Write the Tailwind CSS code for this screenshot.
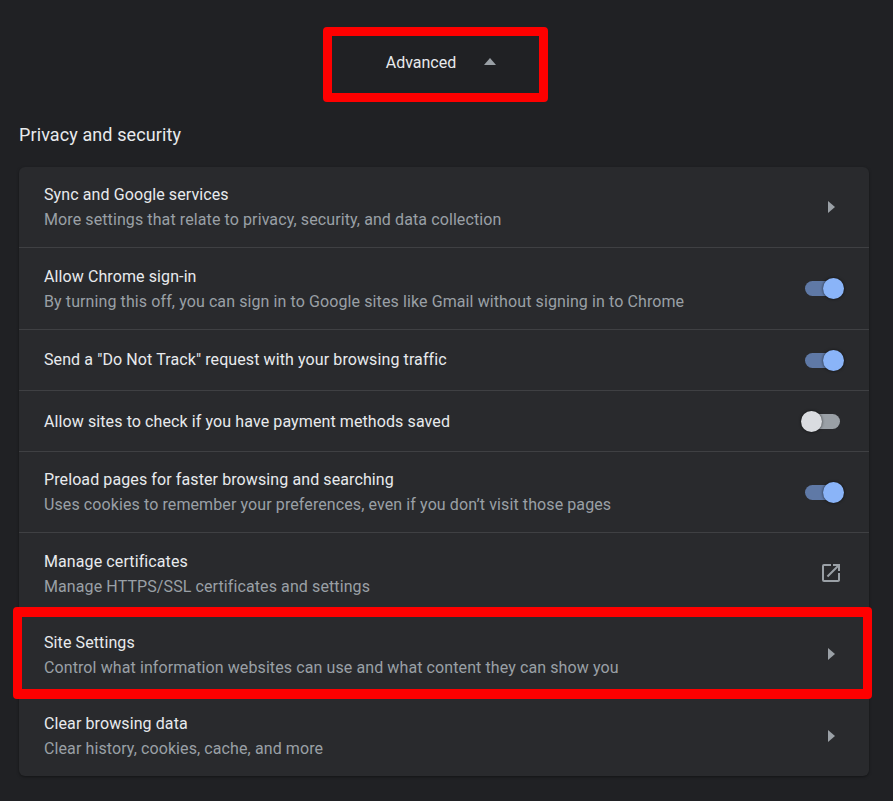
<!DOCTYPE html>
<html lang="en">
<head>
  <meta charset="UTF-8">
  <title>Settings - Privacy and security</title>
  <script src="https://cdn.jsdelivr.net/npm/@tailwindcss/browser@4"></script>
</head>
<body class="bg-[#202124] h-[801px] overflow-hidden relative font-['Roboto',sans-serif]">

  <!-- Advanced toggle -->
  <div class="h-[124px] pt-[2px] flex items-center justify-center">
    <div class="flex items-center gap-[28px] ml-[-11px]">
      <span class="text-[16px] text-[#e8eaed]">Advanced</span>
      <svg class="w-[12px] h-[7px] mb-[3px]" viewBox="0 0 12 7"><path d="M0 7L6 0l6 7z" fill="#9aa0a6"/></svg>
    </div>
  </div>

  <h2 class="px-[19px] text-[18px] leading-[22px] tracking-[0.1px] text-[#e8eaed]">Privacy and security</h2>

  <!-- Card -->
  <div class="mx-[19px] mt-[21px] w-[850px] h-[609px] bg-[#292a2d] rounded-[6px] flex flex-col divide-y divide-[#3f4043] shadow-[0_1px_3px_rgba(0,0,0,0.4)] text-[16px] leading-[25px] tracking-[0.1px]">

    <div class="h-[81px] shrink-0 flex items-center justify-between pl-[25px] pr-[34px]">
      <div>
        <p class="text-[#e8eaed]">Sync and Google services</p>
        <p class="text-[#9aa0a6]">More settings that relate to privacy, security, and data collection</p>
      </div>
      <svg class="w-[7px] h-[12px]" viewBox="0 0 7 12"><path d="M0 0l7 6-7 6z" fill="#9aa0a6"/></svg>
    </div>

    <div class="h-[82px] shrink-0 flex items-center justify-between pl-[25px] pr-[29px]">
      <div>
        <p class="text-[#e8eaed]">Allow Chrome sign-in</p>
        <p class="text-[#9aa0a6]">By turning this off, you can sign in to Google sites like Gmail without signing in to Chrome</p>
      </div>
      <div class="relative w-[35px] h-[15px] rounded-full bg-[#5f79a6]">
        <span class="absolute right-[-4px] top-[-3px] w-[21px] h-[21px] rounded-full bg-[#8ab4f8] shadow-[0_0_3px_rgba(0,0,0,0.7)]"></span>
      </div>
    </div>

    <div class="h-[61px] shrink-0 flex items-center justify-between pl-[25px] pr-[29px]">
      <p class="pb-[2px] text-[#e8eaed]">Send a "Do Not Track" request with your browsing traffic</p>
      <div class="relative w-[35px] h-[15px] rounded-full bg-[#5f79a6]">
        <span class="absolute right-[-4px] top-[-3px] w-[21px] h-[21px] rounded-full bg-[#8ab4f8] shadow-[0_0_3px_rgba(0,0,0,0.7)]"></span>
      </div>
    </div>

    <div class="h-[61px] shrink-0 flex items-center justify-between pl-[25px] pr-[29px]">
      <p class="text-[#e8eaed]">Allow sites to check if you have payment methods saved</p>
      <div class="relative w-[35px] h-[15px] rounded-full bg-[#9aa0a6]">
        <span class="absolute left-[-4px] top-[-3px] w-[21px] h-[21px] rounded-full bg-[#dadce0] shadow-[0_0_3px_rgba(0,0,0,0.7)]"></span>
      </div>
    </div>

    <div class="h-[81px] shrink-0 flex items-center justify-between pl-[25px] pr-[29px]">
      <div>
        <p class="text-[#e8eaed]">Preload pages for faster browsing and searching</p>
        <p class="text-[#9aa0a6]">Uses cookies to remember your preferences, even if you don’t visit those pages</p>
      </div>
      <div class="relative w-[35px] h-[15px] rounded-full bg-[#5f79a6]">
        <span class="absolute right-[-4px] top-[-3px] w-[21px] h-[21px] rounded-full bg-[#8ab4f8] shadow-[0_0_3px_rgba(0,0,0,0.7)]"></span>
      </div>
    </div>

    <div class="h-[81px] shrink-0 flex items-center justify-between pl-[25px] pr-[26px]">
      <div class="pt-[2px]">
        <p class="text-[#e8eaed]">Manage certificates</p>
        <p class="text-[#9aa0a6]">Manage HTTPS/SSL certificates and settings</p>
      </div>
      <svg class="w-[24px] h-[24px]" viewBox="0 0 24 24"><path d="M19 19H5V5h7V3H5a2 2 0 0 0-2 2v14a2 2 0 0 0 2 2h14c1.1 0 2-.9 2-2v-7h-2v7zM14 3v2h3.59l-9.83 9.83 1.41 1.41L19 6.41V10h2V3h-7z" fill="#9aa0a6"/></svg>
    </div>

    <div class="h-[81px] shrink-0 flex items-center justify-between pl-[25px] pr-[34px]">
      <div class="pt-[2px]">
        <p class="text-[#e8eaed]">Site Settings</p>
        <p class="text-[#9aa0a6]">Control what information websites can use and what content they can show you</p>
      </div>
      <svg class="w-[7px] h-[12px]" viewBox="0 0 7 12"><path d="M0 0l7 6-7 6z" fill="#9aa0a6"/></svg>
    </div>

    <div class="h-[81px] shrink-0 flex items-center justify-between pl-[25px] pr-[34px]">
      <div>
        <p class="text-[#e8eaed]">Clear browsing data</p>
        <p class="text-[#9aa0a6]">Clear history, cookies, cache, and more</p>
      </div>
      <svg class="w-[7px] h-[12px]" viewBox="0 0 7 12"><path d="M0 0l7 6-7 6z" fill="#9aa0a6"/></svg>
    </div>
  </div>

  <!-- Red annotation boxes -->
  <div class="absolute left-[323px] top-[27px] w-[225px] h-[75px] border-[9px] border-[#fe0000] rounded-[4px]"></div>
  <div class="absolute left-[13px] top-[607px] w-[859px] h-[92px] border-x-[9px] border-y-[10px] border-[#fe0000] rounded-[4px]"></div>

</body>
</html>
